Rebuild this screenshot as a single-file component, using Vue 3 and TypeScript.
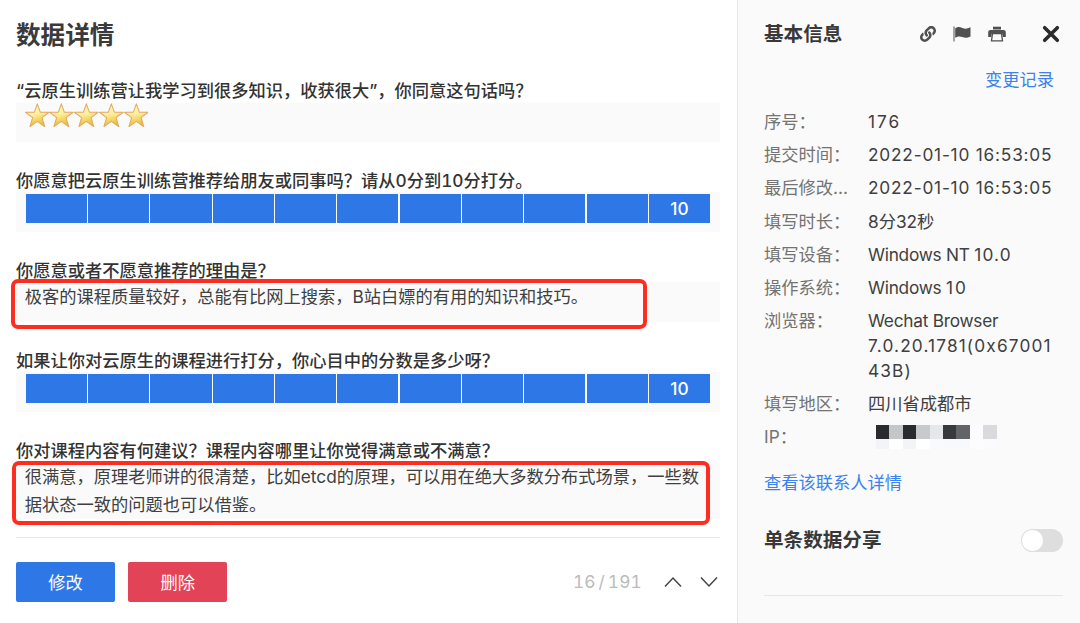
<script setup lang="ts">
interface Question {
  label: string
  kind: 'stars' | 'score' | 'text'
  answer?: string
  score?: number
  mark?: string
}
interface ValuePart {
  text: string
  style: 'plain' | 'latin' | 'num' | 'wide' | 'widest'
}
interface InfoRow {
  label: string
  parts?: ValuePart[]
}

const questions: Question[] = [
  { label: '“云原生训练营让我学习到很多知识，收获很大”，你同意这句话吗？', kind: 'stars', score: 5 },
  { label: '你愿意把云原生训练营推荐给朋友或同事吗？请从0分到10分打分。', kind: 'score', score: 10 },
  {
    label: '你愿意或者不愿意推荐的理由是？',
    kind: 'text',
    answer: '极客的课程质量较好，总能有比网上搜索，B站白嫖的有用的知识和技巧。',
    mark: 'mark-reason',
  },
  { label: '如果让你对云原生的课程进行打分，你心目中的分数是多少呀？', kind: 'score', score: 10 },
  {
    label: '你对课程内容有何建议？课程内容哪里让你觉得满意或不满意？',
    kind: 'text',
    answer: '很满意，原理老师讲的很清楚，比如etcd的原理，可以用在绝大多数分布式场景，一些数据状态一致的问题也可以借鉴。',
    mark: 'mark-advice',
  },
]

const info: InfoRow[] = [
  { label: '序号：', parts: [{ text: '176', style: 'widest' }] },
  { label: '提交时间：', parts: [{ text: '2022-01-10 16:53:05', style: 'num' }] },
  { label: '最后修改...', parts: [{ text: '2022-01-10 16:53:05', style: 'num' }] },
  { label: '填写时长：', parts: [{ text: '8分32秒', style: 'plain' }] },
  { label: '填写设备：', parts: [{ text: 'Windows NT ', style: 'latin' }, { text: '10.0', style: 'wide' }] },
  { label: '操作系统：', parts: [{ text: 'Windows ', style: 'latin' }, { text: '10', style: 'widest' }] },
  { label: '浏览器：', parts: [{ text: 'Wechat Browser ', style: 'latin' }, { text: '7.0.20.1781(0x6700143B)', style: 'wide' }] },
  { label: '填写地区：', parts: [{ text: '四川省成都市', style: 'plain' }] },
  { label: 'IP：' },
]

const mosaic: string[] = ['#2a2b2e', '#c5c6c9', '#2a2b2e', '#c8c9cc', '#e6e7ea', '#38393c', '#636467', '#fcfcff', '#d9dadd']
const mosaicBase: string[] = ['#f3f4f7', '#ffffff', '#f3f4f7', '#ffffff', '#f9fafd', '#f8f9fd', '#f8f9fd', '#fcfcff', '#fbfbfe']

const linkHalf =
  'M326.612 185.391c59.747 59.809 58.927 155.698.36 214.59-.11.12-.24.25-.36.37l-67.2 67.2c-59.27 59.27-155.699 59.262-214.96 0-59.27-59.26-59.27-155.7 0-214.96l37.106-37.106c9.84-9.84 26.786-3.3 27.294 10.606.648 17.722 3.826 35.527 9.69 52.721 1.986 5.822.567 12.262-3.783 16.612l-13.087 13.087c-28.026 28.026-28.905 73.66-1.155 101.96 28.024 28.579 74.086 28.749 102.325.51l67.2-67.19c28.191-28.191 28.073-73.757 0-101.83-3.701-3.694-7.429-6.564-10.341-8.569a16.037 16.037 0 0 1-6.947-12.606c-.396-10.567 3.348-21.456 11.698-29.806l21.054-21.055c5.521-5.521 14.182-6.199 20.584-1.731a152.482 152.482 0 0 1 20.522 17.197z'
</script>

<template>
  <div class="page">
    <main class="detail">
      <h1 class="title">数据详情</h1>
      <section v-for="q in questions" :key="q.label" class="question">
        <div class="label">{{ q.label }}</div>
        <div class="field" :class="q.kind">
          <template v-if="q.kind === 'stars'">
            <svg v-for="n in q.score" :key="n" class="star" viewBox="0 0 24 24">
              <defs>
                <linearGradient id="gold" x1="0" y1="0" x2="0.25" y2="1">
                  <stop offset="0" stop-color="#fff3b8" />
                  <stop offset="0.5" stop-color="#fff0a5" />
                  <stop offset="1" stop-color="#e6c030" />
                </linearGradient>
              </defs>
              <path
                d="M12 .8l2.900 8.100 8.600.1-6.900 5.200 2.600 8.800L12 17.800 4.800 23l2.600-8.800L.5 9l8.600-.1z"
                fill="url(#gold)"
                stroke="#e3a862"
                stroke-width="1"
                stroke-linejoin="round"
              />
            </svg>
          </template>
          <div v-else-if="q.kind === 'score'" class="cells">
            <span v-for="n in 11" :key="n" class="cell">{{ n === 11 ? q.score : '' }}</span>
          </div>
          <template v-else>{{ q.answer }}</template>
          <i v-if="q.mark" class="mark" :class="q.mark"></i>
        </div>
      </section>
      <footer class="footer">
        <button class="btn edit">修改</button>
        <button class="btn remove">删除</button>
        <span class="pager">16 / 191</span>
        <svg class="arrow" viewBox="0 0 18 12"><path d="M1 10.500L9 2l8 8.500" /></svg>
        <svg class="arrow" viewBox="0 0 18 12"><path d="M1 1.500L9 10l8-8.500" /></svg>
      </footer>
    </main>

    <aside class="side">
      <header class="head">
        <h2>基本信息</h2>
        <svg class="icon link" viewBox="0 0 512 512">
          <path :d="linkHalf" fill="#505050" />
          <path :d="linkHalf" fill="#505050" transform="rotate(180 256 256)" />
        </svg>
        <svg class="icon flag" viewBox="0 0 18 18">
          <path d="M1 1.500v15" stroke="#777" stroke-width="1.300" />
          <path d="M2.200 3.200C5 1.500 7 1.900 9.300 2.900c2.600 1.100 5 1 8.200-.6v9.200c-3.200 1.700-5.500 1.700-8.200.6-2.300-.9-4.300-1-7.100.7z" fill="#505050" />
        </svg>
        <svg class="icon print" viewBox="0 0 18 18">
          <path d="M5 1.700h8v2.800H5z" fill="#505050" />
          <path d="M2.500 5h13q2.300 0 2.300 2v5h-3l-.6-3.500H3.800L3.200 12h-3V7q0-2 2.300-2z" fill="#505050" />
          <path d="M4.500 8.500h9l1 7.400h-11z" fill="#fafafa" stroke="#505050" stroke-width="1.300" />
        </svg>
        <svg class="icon close" viewBox="0 0 18 18">
          <path d="M3.300 3.300l11.400 11.400M14.700 3.300L3.300 14.700" stroke="#2b2b2b" stroke-width="3.200" stroke-linecap="round" />
        </svg>
      </header>
      <a class="changes">变更记录</a>
      <dl class="info">
        <div v-for="row in info" :key="row.label" class="row">
          <dt>{{ row.label }}</dt>
          <dd v-if="row.parts">
            <span v-for="part in row.parts" :key="part.text" :class="part.style">{{ part.text }}</span>
          </dd>
          <dd v-else class="mosaic">
            <span v-for="(c, i) in mosaic" :key="i" class="tile" :style="{ background: c }"></span>
            <span v-for="(c, i) in mosaicBase" :key="'b' + i" class="tile" :style="{ background: c }"></span>
          </dd>
        </div>
      </dl>
      <a class="contact">查看该联系人详情</a>
      <div class="share">
        <h2>单条数据分享</h2>
        <span class="switch"></span>
      </div>
    </aside>
  </div>
</template>

<style>
body {
  margin: 0;
  background: #fff;
}
</style>

<style scoped>
.page {
  display: flex;
  width: 1080px;
  height: 623px;
  overflow: hidden;
  box-sizing: border-box;
  font-family: Inter, 'Noto Sans CJK SC', sans-serif;
  font-size: 17.25px;
  color: #404040;
}
h1,
h2,
dl,
dd {
  margin: 0;
}
.detail {
  width: 737px;
  box-sizing: border-box;
  padding: 17px 17.5px 0 16px;
}
.title {
  height: 36px;
  margin-bottom: 25px;
  font-size: 24.6px;
  line-height: 36px;
  font-weight: 700;
  color: #3a3a3a;
}
.question {
  margin-bottom: 26.2px;
}
.label {
  height: 24.5px;
  line-height: 25.5px;
  font-weight: 500;
  font-feature-settings: 'tnum';
  color: #333;
  white-space: nowrap;
}
.field {
  position: relative;
  box-sizing: border-box;
  min-height: 39.3px;
  padding: 0 9.5px 0 8.8px;
  background: #fafafa;
  line-height: 28px;
}
.field.text {
  padding-top: 0.7px;
}
.field.stars {
  display: flex;
}
.star {
  width: 24.7px;
  height: 24.7px;
}
.cells {
  display: flex;
  gap: 1.2px;
  margin-left: 1px;
  padding-top: 1.5px;
}
.cell {
  flex: 1;
  height: 29.3px;
  background: #2d77e6;
  color: #fff;
  line-height: 29.3px;
  font-weight: 500;
  text-align: center;
}
.mark {
  position: absolute;
  box-sizing: border-box;
  border: 4px solid #ff2d20;
  border-radius: 7px;
}
.mark-reason {
  left: -5px;
  top: -3px;
  width: 636px;
  height: 49.5px;
}
.mark-advice {
  left: -4px;
  top: -1px;
  width: 698px;
  height: 64px;
}
.footer {
  display: flex;
  align-items: center;
  margin-top: -8.7px;
  padding-top: 24.7px;
  border-top: 1px solid #e8e8e8;
}
.btn {
  width: 99px;
  height: 39.5px;
  margin-right: 13.3px;
  padding: 0 0 2px;
  border: 0;
  border-radius: 2px;
  color: #fff;
  font: inherit;
}
.edit {
  background: #2d77e6;
}
.remove {
  background: #e24356;
}
.pager {
  margin-left: auto;
  padding-bottom: 2px;
  font-feature-settings: 'tnum';
  letter-spacing: 0.2px;
  word-spacing: -2px;
  color: #bbb;
}
.arrow {
  width: 18px;
  height: 12px;
  margin-right: 1.5px;
  margin-left: 16.5px;
  fill: none;
  stroke: #444;
  stroke-width: 1.5;
}
.pager + .arrow {
  margin-left: 22px;
}
.side {
  flex: 1;
  box-sizing: border-box;
  padding: 17px 17px 0 26px;
  border-left: 1px solid #e6e6e6;
  background: #fafafa;
}
.head {
  display: flex;
  align-items: center;
  height: 33px;
}
h2 {
  font-size: 19.6px;
  line-height: 33px;
  font-weight: 700;
  color: #383838;
}
.head h2 {
  padding-top: 1px;
}
.icon {
  width: 18px;
  height: 18px;
  margin-right: 16.5px;
}
.link {
  width: 16px;
  height: 16px;
  margin-right: 17.5px;
  margin-left: auto;
}
.print {
  margin-right: 35px;
}
.close {
  width: 20px;
  height: 20px;
  margin-right: 2.2px;
}
a {
  display: block;
  color: #3b82ec;
}
.changes {
  height: 25px;
  margin: 16.8px 9px 17.9px 0;
  line-height: 25px;
  text-align: right;
}
.row {
  display: flex;
  margin-bottom: 8.7px;
  line-height: 24.6px;
}
dt {
  width: 104px;
  flex: none;
  color: #737373;
  white-space: nowrap;
}
dd {
  width: 187px;
  overflow-wrap: anywhere;
}
.latin {
  white-space: pre-wrap;
  letter-spacing: -0.25px;
}
.num {
  letter-spacing: 0.8px;
}
.wide {
  letter-spacing: 1.15px;
}
.widest {
  letter-spacing: 2px;
}
.mosaic {
  display: grid;
  grid-template-columns: repeat(9, 13.4px);
  grid-template-rows: 14px 10px;
  padding-left: 8px;
  box-sizing: border-box;
}
.tile {
  display: block;
}
.contact {
  margin-top: 20.4px;
  line-height: 25px;
}
.share {
  display: flex;
  align-items: center;
  justify-content: space-between;
  height: 33px;
  margin-top: 29px;
  padding-bottom: 38px;
  border-bottom: 1px solid #e6e6e6;
}
.switch {
  width: 42px;
  height: 22.5px;
  border-radius: 12px;
  background: #dedede;
}
.switch::before {
  content: '';
  display: block;
  width: 20.5px;
  height: 20.5px;
  margin: 1px;
  border-radius: 50%;
  background: #fff;
}
</style>
